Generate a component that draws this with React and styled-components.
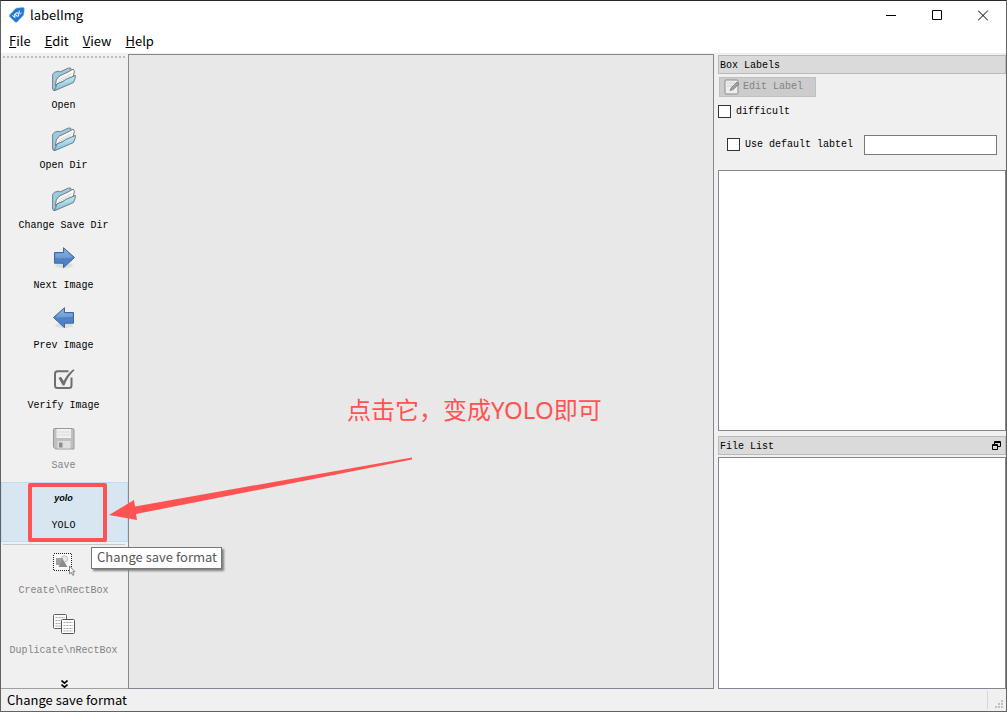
import { useState } from "react";
import styled, { createGlobalStyle } from "styled-components";

const GlobalStyle = createGlobalStyle`
  * {
    box-sizing: border-box;
  }

  body {
    margin: 0;
  }

  button,
  input {
    font: inherit;
    color: inherit;
  }
`;

const uiFont = `"Noto Sans CJK SC", "Noto Sans", sans-serif`;
const monoFont = `"Liberation Mono", "Noto Sans CJK SC", monospace`;

const Window = styled.div`
  min-height: 100vh;
  display: flex;
  flex-direction: column;
  border: 1px solid #626262;
  border-top-color: #2a2729;
  background-color: #f0f0f0;
  color: #000000;
  font-family: ${uiFont};
  font-size: 13px;
`;

const TitleBar = styled.header`
  height: 30px;
  display: flex;
  align-items: center;
  padding: 0 0 2px 8px;
  gap: 5px;
  background-color: #ffffff;
`;

const Title = styled.h1`
  flex: 1;
  margin: 0;
  font-size: 13px;
  font-weight: normal;
  line-height: 18px;
`;

const WindowButtons = styled.div`
  display: flex;
`;

const WindowButton = styled.button`
  width: 46px;
  height: 28px;
  display: flex;
  align-items: center;
  justify-content: center;
  padding: 0;
  border: none;
  background-color: transparent;

  &:hover {
    background-color: #e5e5e5;
  }
`;

const MenuBar = styled.nav`
  height: 22px;
  display: flex;
  align-items: center;
  padding: 0 1px 2px;
  background-color: #ffffff;
`;

const MenuItem = styled.button`
  padding: 0 7px;
  border: none;
  background-color: transparent;
  line-height: 18px;

  &:hover {
    background-color: #e5f3ff;
  }
`;

const Main = styled.main`
  flex: 1;
  display: flex;
`;

const ToolBar = styled.aside`
  width: 127px;
  flex-shrink: 0;
  display: flex;
  flex-direction: column;
  padding-top: 3px;
  border-bottom: 1px solid #a0a0a0;
`;

const Handle = styled.div`
  height: 2px;
  margin: 0 1px 4px 2px;
  background: repeating-linear-gradient(
    90deg,
    #bdbdbd 0 2px,
    transparent 2px 4px
  );
`;

const ToolItem = styled.div`
  position: relative;
`;

const ToolButton = styled.button`
  width: 100%;
  height: 60px;
  display: flex;
  flex-direction: column;
  align-items: center;
  gap: 8px;
  padding: 4px 2px 0 0;
  border: 1px solid ${({ $active }) => ($active ? "#c0dcf3" : "transparent")};
  background-color: ${({ $active }) => ($active ? "#d8e6f2" : "transparent")};
  font-family: ${monoFont};
  font-size: 10px;
  line-height: 14px;
  white-space: nowrap;

  &:disabled {
    color: #838383;
  }
`;

const ToolIcon = styled.span`
  width: 24px;
  height: 24px;
  display: flex;
  align-items: center;
  justify-content: center;
`;

const YoloMark = styled.span`
  padding-bottom: 2px;
  font-family: "Liberation Sans", sans-serif;
  font-size: 9px;
  font-style: italic;
  font-weight: bold;
  line-height: 12px;
`;

const Separator = styled.hr`
  width: calc(100% - 5px);
  height: 1px;
  margin: 2px 3px 2px 2px;
  border: none;
  background-color: #c8c8c8;
`;

const MoreButton = styled.button`
  height: 8px;
  display: flex;
  align-items: center;
  justify-content: center;
  margin-top: auto;
  padding: 0;
  border: none;
  background-color: transparent;
`;

const Highlight = styled.div`
  position: absolute;
  top: 1px;
  left: 27px;
  width: 79px;
  height: 59px;
  border: 4px solid #ff5353;
  border-radius: 2px;
  pointer-events: none;
`;

const Arrow = styled.svg`
  position: absolute;
  z-index: 1;
  top: -26px;
  left: 108px;
  pointer-events: none;
`;

const Tooltip = styled.div`
  position: absolute;
  z-index: 2;
  top: 65px;
  left: 90px;
  padding: 0 4px 2px 5px;
  border: 1px solid #767676;
  background-color: #ffffff;
  box-shadow: 2px 2px 2px #808080;
  color: #575757;
  line-height: 18px;
  white-space: nowrap;
`;

const Canvas = styled.section`
  position: relative;
  flex: 1;
  margin-top: 1px;
  border: 1px solid #828790;
  background-color: #e8e8e8;
`;

const Note = styled.p`
  position: absolute;
  top: 338px;
  left: 218px;
  margin: 0;
  color: #ff5353;
  font-family: "Noto Sans", "Noto Sans CJK SC", sans-serif;
  font-size: 24px;
  line-height: 34px;
  white-space: nowrap;
`;

const Docks = styled.aside`
  width: 288px;
  flex-shrink: 0;
  display: flex;
  flex-direction: column;
  gap: 5px;
  margin-left: 4px;
  padding-top: 2px;
  font-family: ${monoFont};
  font-size: 10px;
  line-height: 14px;
`;

const Dock = styled.section`
  display: flex;
  flex-direction: column;
  flex: ${({ $grow }) => $grow} 0 0;
`;

const DockTitle = styled.header`
  height: 19px;
  display: flex;
  align-items: center;
  justify-content: space-between;
  padding: 0 4px 0 1px;
  border: 1px solid #b9b9b9;
  background-color: #dadada;
`;

const DockName = styled.h2`
  margin: 0;
  padding-top: 2px;
  font-size: 10px;
  font-weight: normal;
`;

const FloatButton = styled.button`
  display: flex;
  padding: 0;
  border: none;
  background-color: transparent;
`;

const EditButton = styled.button`
  width: 97px;
  height: 20px;
  display: flex;
  align-items: center;
  gap: 3px;
  margin: 3px 0 0 1px;
  padding: 0 4px;
  border: 1px solid #bfbfbf;
  background-color: #cccccc;

  &:disabled {
    color: #838383;
  }
`;

const CheckRow = styled.div`
  display: flex;
  align-items: center;
  margin-top: ${({ $top }) => $top}px;
  padding: ${({ $inset }) => ($inset ? "0 9px" : "0")};
`;

const CheckLabel = styled.label`
  display: flex;
  align-items: flex-start;
  gap: 5px;
  white-space: nowrap;
`;

const CheckBox = styled.input`
  appearance: none;
  width: 13px;
  height: 13px;
  margin: 0;
  border: 1px solid #333333;
  background-color: #ffffff;

  &:checked {
    box-shadow: inset 0 0 0 2px #ffffff;
    background-color: #333333;
  }
`;

const LabelInput = styled.input`
  flex: 1;
  min-width: 0;
  height: 20px;
  margin-left: 11px;
  padding: 0 3px;
  border: 1px solid #7a7a7a;
  background-color: #ffffff;
`;

const ListBox = styled.ul`
  flex: 1;
  margin: ${({ $top }) => $top}px 0 0;
  padding: 0;
  border: 1px solid #828790;
  background-color: #ffffff;
  list-style: none;
`;

const StatusBar = styled.footer`
  height: 22px;
  display: flex;
  align-items: center;
  padding-left: 6px;
  line-height: 18px;
`;

const StatusText = styled.span`
  flex: 1;
`;

const Grip = styled.div`
  width: 19px;
  height: 18px;
  display: flex;
  align-items: flex-end;
  justify-content: flex-end;
  padding-right: 2px;
  border-left: 1px solid #d7d7d7;
`;

const FolderIcon = () => (
  <svg width="24" height="24" viewBox="0 0 24 24">
    <defs>
      <linearGradient id="folderFront" x1="0" y1="0" x2="0.3" y2="1">
        <stop offset="0" stopColor="#cfe8f3" />
        <stop offset="0.5" stopColor="#b4dcec" />
        <stop offset="1" stopColor="#80b9d5" />
      </linearGradient>
    </defs>
    <path
      d="M.6 7.2 2.7 5.2 6 4.2 8.3 4.8 16 1.2 18.6 1 19.5 4 4 23 1.7 23.4.6 22Z"
      fill="#9ccbe0"
      stroke="#66777f"
      strokeWidth=".9"
    />
    <path
      d="M3.4 19 4.3 13 7 9.3 16 5 19.2 3.2 21.2 2.2 22.4 4.4 21 10 11 14.5 5 17Z"
      fill="#fafafa"
      stroke="#6c6c6c"
      strokeWidth=".9"
    />
    <path d="M6.5 13 19.5 6.8M6 15 19 8.8" stroke="#dadada" fill="none" />
    <path
      d="M5 17 11 14.5 13.7 12.5 23.5 8.4Q23.6 11 21.5 15.5L4.3 23 1.8 23.4Q3.6 21.5 5 17Z"
      fill="url(#folderFront)"
      stroke="#5b7884"
      strokeWidth=".9"
    />
  </svg>
);

const ArrowIcon = ({ back }) => (
  <svg width="24" height="24" viewBox="0 0 24 24">
    <defs>
      <linearGradient id="arrowBlue" x1="0" y1="0" x2="0" y2="1">
        <stop offset="0" stopColor="#8cb3df" />
        <stop offset="0.5" stopColor="#4f82c5" />
        <stop offset="1" stopColor="#4c83ca" />
      </linearGradient>
    </defs>
    <ellipse cx="12" cy="18.5" rx="9" ry="2.5" fill="#dedede" />
    <path
      d={
        back
          ? "M1.5 10.5 12.5.7V5.5H21.5V16.2H12.5V20.7Z"
          : "M22.5 10.5 11.5.7V5.5H2.5V16.2H11.5V20.7Z"
      }
      fill="url(#arrowBlue)"
      stroke="#3c67a2"
      strokeWidth="1"
    />
    <path
      d={
        back
          ? "M3 10.5 11.5 3V6.5H20.5V10Q10 10 3 10.5Z"
          : "M21 10.5 12.5 3V6.5H3.5V11Q12 11.5 21 10.5Z"
      }
      fill="#a8c6e9"
      opacity=".35"
    />
  </svg>
);

const VerifyIcon = () => (
  <svg width="24" height="24" viewBox="0 0 24 24" fill="none" stroke="#6e6e6e">
    <path
      d="M16.5 4.2H5.5Q3 4.2 3 6.7V18.5Q3 21 5.5 21H17Q19.5 21 19.5 18.5V10.5"
      strokeWidth="2"
    />
    <path
      d="M6.5 11 9 9.8 11.7 14Q15 7 21.3 2.2L22.6 3.3Q16 9 12.4 18.5H10.8Z"
      fill="#6e6e6e"
      stroke="none"
    />
  </svg>
);

const SaveIcon = () => (
  <svg width="24" height="24" viewBox="0 0 24 24">
    <path
      d="M2.5 1.5H20.5Q22 1.5 22 3V22H3.5L1.5 20V2.5Q1.5 1.5 2.5 1.5Z"
      fill="#bfbfbf"
      stroke="#999999"
    />
    <path d="M4.5 2H19V11H4.5Z" fill="#f1f1f1" />
    <path d="M5 5H18.5M5 8H18.5" stroke="#d8d8d8" />
    <path d="M5.5 14H18.5V21.5H5.5Z" fill="#dfdfdf" />
    <path d="M7 15.5H10.5V20.5H7Z" fill="#8c8c8c" />
  </svg>
);

const CreateIcon = () => (
  <svg width="24" height="24" viewBox="0 0 24 24">
    <rect
      x="1.5"
      y="1.5"
      width="18"
      height="17"
      fill="#f8f8f8"
      stroke="#202020"
      strokeDasharray="1 1"
      shapeRendering="crispEdges"
    />
    <circle cx="12.5" cy="7" r="3.2" fill="#e9e9e9" stroke="#bdbdbd" />
    <path d="M4 6H11V13H4Z" fill="#a0a0a0" />
    <path d="M10.5 7 15.5 15H6.5Z" fill="#8c8c8c" />
    <path
      d="M17.5 14V22L19.3 20.3 20.7 23.3 22 22.6 20.7 19.7H23Z"
      fill="#ffffff"
      stroke="#777777"
      strokeWidth=".9"
    />
  </svg>
);

const DuplicateIcon = () => (
  <svg width="24" height="24" viewBox="0 0 24 24">
    <rect x="1.5" y="2.5" width="13" height="14" rx="1" fill="#fafafa" stroke="#626262" />
    <path
      d="M3.5 5.5H13M3.5 8.5H13M3.5 11.5H13M3.5 14H13"
      stroke="#a9a9a9"
      strokeDasharray="2 1"
    />
    <rect x="9.5" y="7.5" width="13" height="14" rx="1" fill="#ffffff" stroke="#555555" />
    <path
      d="M11.5 10.5H21M11.5 13.5H21M11.5 16.5H21M11.5 19H21"
      stroke="#a3a3a3"
      strokeDasharray="2 1"
    />
  </svg>
);

const EditIcon = () => (
  <svg width="16" height="16" viewBox="0 0 16 16">
    <rect x="1" y="1" width="13" height="14" rx="1" fill="#eeeeee" stroke="#8c8c8c" />
    <path d="M3 4H11M3 7H9" stroke="#d0d0d0" />
    <path d="M6 11.5 7 9 13 3 15 5 9 10.7Z" fill="#a0a0a0" stroke="#777777" strokeWidth=".7" />
  </svg>
);

const LogoIcon = () => (
  <svg width="16" height="16" viewBox="0 0 16 16">
    <path
      d="M7 1.2 14 .5Q15.2.5 15.3 2L14.6 8 8.2 14.8Q7 15.8 6 14.8L.8 9.8Q0 8.8.8 7.8Z"
      fill="#2377d4"
      stroke="#63acbd"
      strokeWidth=".5"
    />
    <g fill="none" stroke="#ffffff" strokeWidth="1">
      <path d="m3.3 8.5 2.8 2-.8-3.6" />
      <ellipse cx="8.2" cy="7.5" rx="1.4" ry="1.8" transform="rotate(-40 8.2 7.5)" />
      <path d="M11 3.8Q9.2 4.3 10.2 6T12.5 5.8" />
    </g>
  </svg>
);

const menus = ["File", "Edit", "View", "Help"];

const tools = [
  { label: "Open", icon: <FolderIcon /> },
  { label: "Open Dir", icon: <FolderIcon /> },
  { label: "Change Save Dir", icon: <FolderIcon /> },
  { label: "Next Image", icon: <ArrowIcon /> },
  { label: "Prev Image", icon: <ArrowIcon back /> },
  { label: "Verify Image", icon: <VerifyIcon /> },
  { label: "Save", icon: <SaveIcon />, disabled: true },
];

const boxTools = [
  { label: "Create\\nRectBox", icon: <CreateIcon /> },
  { label: "Duplicate\\nRectBox", icon: <DuplicateIcon /> },
];

const App = () => {
  const [difficult, setDifficult] = useState(false);
  const [useDefault, setUseDefault] = useState(false);
  const [defaultLabel, setDefaultLabel] = useState("");

  return (
    <>
      <GlobalStyle />
      <Window>
        <TitleBar>
          <LogoIcon />
          <Title>labelImg</Title>
          <WindowButtons>
            <WindowButton aria-label="Minimize">
              <svg width="10" height="11" stroke="#000000">
                <path d="M0 5.5H10" />
              </svg>
            </WindowButton>
            <WindowButton aria-label="Maximize">
              <svg width="10" height="11" fill="none" stroke="#000000">
                <path d="M.5.5H9.5V9.5H.5Z" />
              </svg>
            </WindowButton>
            <WindowButton aria-label="Close">
              <svg width="10" height="11" stroke="#000000">
                <path d="M0 .5 10 10.5M10 .5 0 10.5" />
              </svg>
            </WindowButton>
          </WindowButtons>
        </TitleBar>

        <MenuBar>
          {menus.map((menu) => (
            <MenuItem key={menu}>
              <u>{menu[0]}</u>
              {menu.slice(1)}
            </MenuItem>
          ))}
        </MenuBar>

        <Main>
          <ToolBar>
            <Handle />
            {tools.map((tool) => (
              <ToolButton key={tool.label} disabled={tool.disabled}>
                <ToolIcon>{tool.icon}</ToolIcon>
                {tool.label}
              </ToolButton>
            ))}
            <ToolItem>
              <ToolButton $active aria-describedby="format-tip">
                <ToolIcon>
                  <YoloMark>yolo</YoloMark>
                </ToolIcon>
                YOLO
              </ToolButton>
              <Highlight />
              <Arrow width="306" height="66" viewBox="0 0 306 66">
                <path
                  d="M0 59 25 44 26 50.5 303 1.5V3.5L27 58 28 64Z"
                  fill="#ff5353"
                />
              </Arrow>
              <Tooltip id="format-tip" role="tooltip">
                Change save format
              </Tooltip>
            </ToolItem>
            <Separator />
            {boxTools.map((tool) => (
              <ToolButton key={tool.label} disabled>
                <ToolIcon>{tool.icon}</ToolIcon>
                {tool.label}
              </ToolButton>
            ))}
            <MoreButton aria-label="More tools">
              <svg width="7" height="8" fill="none" stroke="#000000" strokeWidth="1.6">
                <path d="M.5.5 3.5 3.2 6.5.5M.5 4.5 3.5 7.2 6.5 4.5" />
              </svg>
            </MoreButton>
          </ToolBar>

          <Canvas>
            <Note>点击它，变成YOLO即可</Note>
          </Canvas>

          <Docks>
            <Dock $grow={376}>
              <DockTitle>
                <DockName>Box Labels</DockName>
              </DockTitle>
              <EditButton disabled>
                <EditIcon />
                Edit Label
              </EditButton>
              <CheckRow $top={8}>
                <CheckLabel>
                  <CheckBox
                    type="checkbox"
                    checked={difficult}
                    onChange={(e) => setDifficult(e.target.checked)}
                  />
                  difficult
                </CheckLabel>
              </CheckRow>
              <CheckRow $top={16} $inset>
                <CheckLabel>
                  <CheckBox
                    type="checkbox"
                    checked={useDefault}
                    onChange={(e) => setUseDefault(e.target.checked)}
                  />
                  Use default labtel
                </CheckLabel>
                <LabelInput
                  aria-label="Default label"
                  value={defaultLabel}
                  onChange={(e) => setDefaultLabel(e.target.value)}
                />
              </CheckRow>
              <ListBox $top={15} aria-label="Box labels" />
            </Dock>
            <Dock $grow={253}>
              <DockTitle>
                <DockName>File List</DockName>
                <FloatButton aria-label="Float panel">
                  <svg width="9" height="9" fill="none" stroke="#000000">
                    <path d="M2.5 3V.5H8.5V5.5H6M2.5 1.5H8.5M.5 3.5H5.5V8.5H.5ZM.5 4.5H5.5" />
                  </svg>
                </FloatButton>
              </DockTitle>
              <ListBox $top={2} aria-label="Files" />
            </Dock>
          </Docks>
        </Main>

        <StatusBar>
          <StatusText>Change save format</StatusText>
          <Grip>
            <svg width="9" height="9" fill="#bfbfbf">
              <path d="M6 0h2v2H6ZM3 3h2v2H3ZM6 3h2v2H6ZM0 6h2v2H0ZM3 6h2v2H3ZM6 6h2v2H6Z" />
            </svg>
          </Grip>
        </StatusBar>
      </Window>
    </>
  );
};

export default App;
